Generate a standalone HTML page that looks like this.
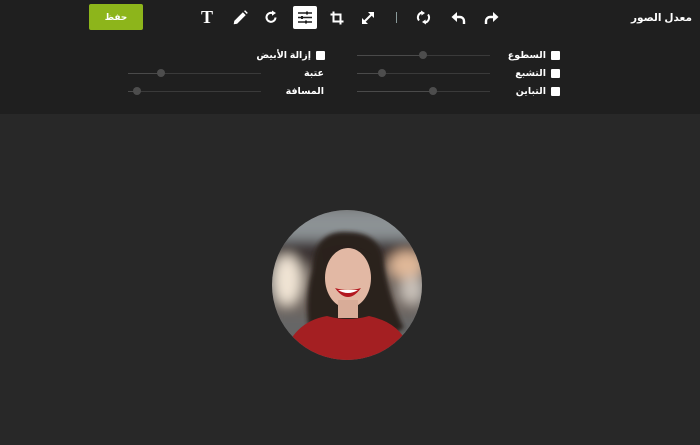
<!DOCTYPE html>
<html lang="ar"><head><meta charset="utf-8"><style>
*{margin:0;padding:0;box-sizing:border-box}
body{width:700px;height:445px;background:#282828;font-family:"Liberation Sans","DejaVu Sans",sans-serif;overflow:hidden;position:relative;color:#fff}
.top{position:absolute;left:0;top:0;width:700px;height:114px;background:#1f1f1f}
.abs{position:absolute}
.btn{left:89px;top:4px;width:54px;height:26px;background:#8db51b;border-radius:2px;font-size:9px;font-weight:bold;text-align:center;line-height:26px}
.title{right:8px;top:12px;font-size:10.5px;font-weight:bold;direction:rtl}
.lbl{font-size:9.5px;font-weight:bold;direction:rtl;white-space:nowrap}
.cb{width:9px;height:9px;background:#fff;border-radius:1px}
.track{height:1px;background:#3a3a3a}
.fill{height:1px;background:#4a4a4a;position:absolute;left:0;top:0}
.knob{width:8px;height:8px;border-radius:50%;background:#4d4d4d;position:absolute;top:-4px}
svg.i{position:absolute}
</style></head><body>
<div class="top"></div>
<div class="abs btn">حفظ</div>
<div class="abs title">معدل الصور</div>

<div class="abs" style="left:201px;top:7px;font-family:'Liberation Serif',serif;font-size:18px;font-weight:bold">T</div>
<svg class="i" style="left:232px;top:10px" width="16" height="16" viewBox="0 0 14 14"><path d="M1.5 12.5 L2 9.5 L9.5 2 L12 4.5 L4.5 12 Z" fill="#fff"/><path d="M10.5 1 L11.5 0.2 L13.8 2.5 L13 3.5Z" fill="#fff"/></svg>
<svg class="i" style="left:264px;top:10px" width="15" height="15" viewBox="0 0 15 15"><path d="M11.5 7.5 A4.5 4.5 0 1 1 9 3.3" fill="none" stroke="#fff" stroke-width="2"/><path d="M8 0.5 L12 3 L8 5.8 Z" fill="#fff"/></svg>
<div class="abs" style="left:293px;top:6px;width:24px;height:23px;background:#fff;border-radius:2px"></div>
<svg class="i" style="left:297px;top:10px" width="16" height="15" viewBox="0 0 16 15"><path d="M1 3h14M1 7.5h14M1 12h14" stroke="#1f1f1f" stroke-width="1.6"/><path d="M10 1.5v3M5 6v3M9 10.5v3" stroke="#1f1f1f" stroke-width="2"/></svg>
<svg class="i" style="left:330px;top:11px" width="14" height="14" viewBox="0 0 14 14"><path d="M3.5 0.5V10.5H13.5M0.5 3.5H10.5V13.5" fill="none" stroke="#fff" stroke-width="2"/></svg>
<svg class="i" style="left:361px;top:11px" width="14" height="14" viewBox="0 0 14 14"><path d="M2 12 L12 2" stroke="#fff" stroke-width="2"/><path d="M1 7V13H7Z M7 1H13V7Z" fill="#fff"/></svg>
<div class="abs" style="left:396px;top:12px;width:1px;height:11px;background:#8a9a9a"></div>
<svg class="i" style="left:416px;top:10px" width="15" height="15" viewBox="0 0 15 15"><path d="M3 10.5A5 5 0 0 1 6 2.5M12 4.5A5 5 0 0 1 9 12.5" fill="none" stroke="#fff" stroke-width="2"/><path d="M5 0.5L9 3L5.5 5.5Z M10 14.5L6 12L9.5 9.5Z" fill="#fff"/></svg>
<svg class="i" style="left:451px;top:11px" width="15" height="14" viewBox="0 0 15 14"><path d="M4 6H9A4 4 0 0 1 13 10V13" fill="none" stroke="#fff" stroke-width="2.4"/><path d="M6 1V11L0.5 6Z" fill="#fff"/></svg>
<svg class="i" style="left:484px;top:11px" width="15" height="14" viewBox="0 0 15 14"><path d="M11 6H6A4 4 0 0 0 2 10V13" fill="none" stroke="#fff" stroke-width="2.4"/><path d="M9 1V11L14.5 6Z" fill="#fff"/></svg>

<div class="abs cb" style="left:551px;top:51px"></div>
<div class="abs lbl" style="right:154px;top:50px">السطوع</div>
<div class="abs cb" style="left:551px;top:69px"></div>
<div class="abs lbl" style="right:154px;top:68px">التشبع</div>
<div class="abs cb" style="left:551px;top:87px"></div>
<div class="abs lbl" style="right:154px;top:86px">التباين</div>
<div class="abs track" style="left:357px;top:55px;width:133px"><div class="fill" style="width:66px"></div><div class="knob" style="left:62px"></div></div>
<div class="abs track" style="left:357px;top:73px;width:133px"><div class="fill" style="width:25px"></div><div class="knob" style="left:21px"></div></div>
<div class="abs track" style="left:357px;top:91px;width:133px"><div class="fill" style="width:76px"></div><div class="knob" style="left:72px"></div></div>

<div class="abs cb" style="left:316px;top:51px"></div>
<div class="abs lbl" style="right:389px;top:50px">إزالة الأبيض</div>
<div class="abs lbl" style="right:376px;top:68px">عتبة</div>
<div class="abs lbl" style="right:376px;top:86px">المسافة</div>
<div class="abs track" style="left:128px;top:73px;width:133px"><div class="fill" style="width:33px"></div><div class="knob" style="left:29px"></div></div>
<div class="abs track" style="left:128px;top:91px;width:133px"><div class="fill" style="width:9px"></div><div class="knob" style="left:5px"></div></div>

<svg class="i" style="left:272px;top:210px" width="150" height="150" viewBox="0 0 150 150">
<defs>
<clipPath id="c"><circle cx="75" cy="75" r="75"/></clipPath>
<filter id="b"><feGaussianBlur stdDeviation="6"/></filter>
<filter id="b2"><feGaussianBlur stdDeviation="2"/></filter>
</defs>
<g clip-path="url(#c)">
<rect width="150" height="150" fill="#6e6e6e"/>
<g filter="url(#b)">
<rect x="0" y="0" width="150" height="30" fill="#8c9294"/>
<rect x="0" y="30" width="150" height="25" fill="#3a3230"/>
<rect x="0" y="55" width="150" height="50" fill="#6e655e"/>
<ellipse cx="15" cy="70" rx="14" ry="25" fill="#f0e4d4"/>
<ellipse cx="135" cy="55" rx="18" ry="14" fill="#e0b898"/>
<ellipse cx="140" cy="80" rx="12" ry="14" fill="#c8c0b8"/>
<rect x="0" y="105" width="150" height="45" fill="#666"/>
</g>
<g filter="url(#b2)">
<path d="M40 60 Q42 20 75 22 Q110 22 112 55 Q118 90 132 118 L110 130 L40 130 Q30 100 40 60Z" fill="#2a201c"/>
</g>
<ellipse cx="76" cy="68" rx="23" ry="30" fill="#e2b8a4"/>
<rect x="66" y="90" width="20" height="18" fill="#d8ac98"/>
<path d="M63 78 Q76 96 89 78 Q76 82 63 78Z" fill="#b31820"/>
<path d="M66 80 Q76 86 86 80 Z" fill="#fff"/>
<path d="M50 40 Q75 28 100 45 Q90 35 76 38 Q60 38 52 55Z" fill="#2a201c"/>
<path d="M10 150 Q20 112 55 106 Q76 112 97 106 Q135 114 140 150Z" fill="#a41f22"/>
</g>
</svg>
</body></html>
